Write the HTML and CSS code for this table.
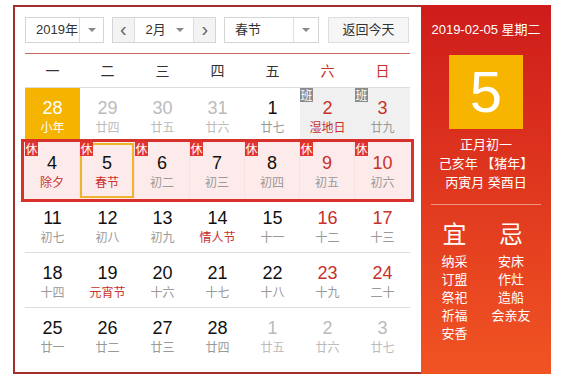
FILE: index.html
```html
<!DOCTYPE html>
<html lang="zh">
<head>
<meta charset="utf-8">
<link rel="stylesheet" href="styles.css">
</head>
<body>
<div class="cal">
  <div class="main">
    <div class="toolbar">
      <div class="sel year"><span class="sel-text">2019年</span><span class="sel-arrow"><i class="tri"></i></span></div>
      <div class="month-group">
        <span class="nav">&lsaquo;</span>
        <div class="sel month"><span class="sel-text">2月</span><span class="sel-arrow noline"><i class="tri"></i></span></div>
        <span class="nav">&rsaquo;</span>
      </div>
      <div class="sel holi"><span class="sel-text">春节</span><span class="sel-arrow"><i class="tri"></i></span></div>
      <div class="today-btn">返回今天</div>
    </div>
    <div class="weekdays">
      <span>一</span><span>二</span><span>三</span><span>四</span><span>五</span><span class="we">六</span><span class="we">日</span>
    </div>
    <div class="grid">
      <div class="week">
        <div class="day sel-day"><b>28</b><em>小年</em></div>
        <div class="day other"><b>29</b><em>廿四</em></div>
        <div class="day other"><b>30</b><em>廿五</em></div>
        <div class="day other"><b>31</b><em>廿六</em></div>
        <div class="day"><b>1</b><em>廿七</em></div>
        <div class="day work red"><i class="badge gray">班</i><b>2</b><em class="fest">湿地日</em></div>
        <div class="day work red"><i class="badge gray">班</i><b>3</b><em>廿九</em></div>
      </div>
      <div class="week holiday">
        <div class="day"><i class="badge">休</i><b>4</b><em class="fest">除夕</em></div>
        <div class="day today"><i class="badge">休</i><b>5</b><em class="fest">春节</em></div>
        <div class="day"><i class="badge">休</i><b>6</b><em>初二</em></div>
        <div class="day"><i class="badge">休</i><b>7</b><em>初三</em></div>
        <div class="day"><i class="badge">休</i><b>8</b><em>初四</em></div>
        <div class="day red"><i class="badge">休</i><b>9</b><em>初五</em></div>
        <div class="day red"><i class="badge">休</i><b>10</b><em>初六</em></div>
      </div>
      <div class="week">
        <div class="day"><b>11</b><em>初七</em></div>
        <div class="day"><b>12</b><em>初八</em></div>
        <div class="day"><b>13</b><em>初九</em></div>
        <div class="day"><b>14</b><em class="fest">情人节</em></div>
        <div class="day"><b>15</b><em>十一</em></div>
        <div class="day red"><b>16</b><em>十二</em></div>
        <div class="day red"><b>17</b><em>十三</em></div>
      </div>
      <div class="week">
        <div class="day"><b>18</b><em>十四</em></div>
        <div class="day"><b>19</b><em class="fest">元宵节</em></div>
        <div class="day"><b>20</b><em>十六</em></div>
        <div class="day"><b>21</b><em>十七</em></div>
        <div class="day"><b>22</b><em>十八</em></div>
        <div class="day red"><b>23</b><em>十九</em></div>
        <div class="day red"><b>24</b><em>二十</em></div>
      </div>
      <div class="week last">
        <div class="day"><b>25</b><em>廿一</em></div>
        <div class="day"><b>26</b><em>廿二</em></div>
        <div class="day"><b>27</b><em>廿三</em></div>
        <div class="day"><b>28</b><em>廿四</em></div>
        <div class="day other"><b>1</b><em>廿五</em></div>
        <div class="day other"><b>2</b><em>廿六</em></div>
        <div class="day other"><b>3</b><em>廿七</em></div>
      </div>
    </div>
  </div>
  <div class="side">
    <div class="side-date">2019-02-05 星期二</div>
    <div class="big-day">5</div>
    <div class="lunar">
      <div>正月初一</div>
      <div>己亥年 【猪年】</div>
      <div>丙寅月 癸酉日</div>
    </div>
    <div class="divider"></div>
    <div class="yiji">
      <div class="col">
        <div class="yj-title">宜</div>
        <div>纳采</div><div>订盟</div><div>祭祀</div><div>祈福</div><div>安香</div>
      </div>
      <div class="col">
        <div class="yj-title">忌</div>
        <div>安床</div><div>作灶</div><div>造船</div><div>会亲友</div>
      </div>
    </div>
  </div>
</div>
</body>
</html>
```

FILE: styles.css
```css
* { box-sizing: border-box; }
html, body { margin: 0; padding: 0; background: #fff; }
body {
  font-family: Arial, "Liberation Sans", "Noto Sans CJK SC", sans-serif;
  color: #222;
}
.cal {
  display: flex;
  margin: 5px 0 0 13px;
  width: 538px;
  height: 369px;
}
.main {
  width: 408px;
  border: 2px solid #a3302e;
  border-right: none;
  padding: 10px 0 0 10px;
}
.toolbar {
  display: flex;
  height: 26px;
  font-size: 13px;
  font-family: "Liberation Sans", "Noto Sans CJK SC", sans-serif;
  color: #333;
}
.sel {
  display: flex;
  border: 1px solid #d5d5d5;
  background: #fff;
  height: 26px;
}
.sel-text {
  flex: 1;
  line-height: 24px;
  padding-left: 10px;
}
.sel-arrow {
  width: 24px;
  border-left: 1px solid #ddd;
  display: flex;
  align-items: center;
  justify-content: center;
}
.sel-arrow.noline { border-left: none; }
.tri {
  width: 0; height: 0;
  border-left: 4px solid transparent;
  border-right: 4px solid transparent;
  border-top: 4px solid #888;
}
.year { width: 79px; }
.month-group {
  display: flex;
  margin-left: 8px;
  width: 104px;
  height: 26px;
  border: 1px solid #d5d5d5;
}
.nav {
  width: 21px;
  background: #f3f3f3;
  color: #666;
  font-size: 20px;
  line-height: 22px;
  text-align: center;
}
.month { border: none; border-left: 1px solid #ddd; border-right: 1px solid #ddd; height: 24px; width: 62px; }
.month .sel-text { padding-left: 11px; line-height: 24px; }
.month .sel-arrow { width: 26px; }
.holi { margin-left: 8px; width: 95px; }
.holi .sel-arrow { width: 25px; }
.today-btn {
  margin-left: 9px;
  width: 81px;
  height: 26px;
  border: 1px solid #ddd;
  background: #f6f6f6;
  text-align: center;
  line-height: 24px;
  color: #333;
}
.weekdays {
  display: grid;
  grid-template-columns: repeat(7, 55px);
  width: 385px;
  margin-top: 10px;
  border-top: 1px solid #c8675f;
  border-bottom: 1px solid #ddd;
  height: 35px;
  font-size: 14px;
  line-height: 33px;
  text-align: center;
  color: #333;
  font-family: "Noto Sans CJK SC", sans-serif;
}
.weekdays .we { color: #c8302c; }
.grid { width: 385px; }
.week {
  display: grid;
  grid-template-columns: repeat(7, 55px);
  height: 55px;
  border-bottom: 1px solid #ddd;
}
.week.last { border-bottom: none; }
.day {
  position: relative;
  display: flex;
  flex-direction: column;
  align-items: center;
  padding-top: 10px;
}
.day b {
  font-weight: normal;
  font-size: 18px;
  line-height: 20px;
  color: #111;
  font-family: Arial, "Liberation Sans", sans-serif;
}
.day em {
  font-style: normal;
  font-size: 12px;
  line-height: 18px;
  color: #999;
  font-family: "Noto Sans CJK SC", sans-serif;
}
.day.red b { color: #c8302c; }
.day em.fest { color: #c8302c; }
.day.other b { color: #bbb; }
.day.other em { color: #bbb; }
.day.sel-day { background: #f5b400; }
.day.sel-day b, .day.sel-day em { color: #fff; }
.day.work { background: #f0f0f0; }
.badge {
  position: absolute;
  left: 0;
  top: -1px;
  font-style: normal;
  font-size: 12px;
  line-height: 14px;
  width: 13px;
  text-align: center;
  color: #fff;
  background: #e2342f;
  font-family: "Noto Sans CJK SC", sans-serif;
}
.badge.gray { background: #8a8a8a; top: 0; }
.holiday {
  background: #fdebeb;
  outline: 3px solid #d8302a;
  outline-offset: 1px;
  box-shadow: 0 0 0 1px #fdebeb;
  border-bottom: none;
  position: relative;
  z-index: 1;
}
.holiday .day { border-right: 1px solid #f8e0e0; }
.holiday .day:last-child { border-right: none; }
.day.today { box-shadow: inset 0 0 0 2px #f0b42a; }
.side {
  width: 130px;
  height: 369px;
  background: linear-gradient(#ce1c1b, #f15423);
  color: #fff;
  font-family: "Liberation Sans", "Noto Sans CJK SC", sans-serif;
  text-align: center;
}
.side-date {
  font-size: 13px;
  line-height: 20px;
  padding-top: 15px;
  color: #fff;
}
.big-day {
  width: 74px;
  height: 74px;
  margin: 15px auto 0;
  background: #f7b500;
  font-size: 58px;
  line-height: 74px;
  font-family: Arial, "Liberation Sans", sans-serif;
}
.lunar {
  margin-top: 6px;
  font-size: 13px;
  line-height: 19px;
}
.divider {
  margin: 12px 10px 0;
  height: 1px;
  background: rgba(255,255,255,0.45);
}
.yiji {
  display: flex;
  justify-content: center;
  gap: 24px;
  margin-top: 13px;
  font-size: 13px;
  line-height: 18px;
  font-family: "Noto Sans CJK SC", sans-serif;
}
.col { display: flex; flex-direction: column; align-items: center; }
.yj-title {
  font-size: 24px;
  line-height: 30px;
  margin-bottom: 4px;
}
```
